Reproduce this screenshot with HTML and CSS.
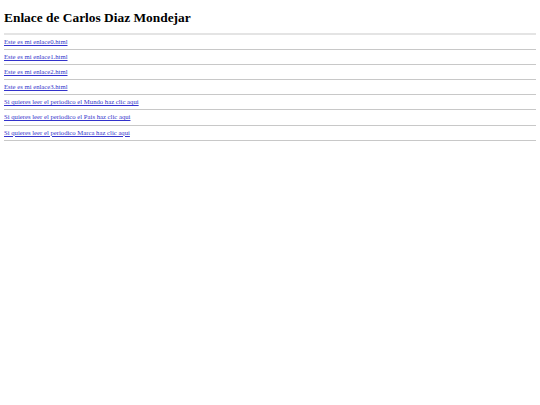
FILE: index.html
```html
<!DOCTYPE html>
<html lang="es">
<head>
<meta charset="utf-8">
<title>Enlace de Carlos Diaz Mondejar</title>
<link rel="stylesheet" href="styles.css">
</head>
<body>
<h1 class="title">Enlace de Carlos Diaz Mondejar</h1>
<div class="rule rule-first"></div>
<ul class="links">
  <li class="item"><a class="link" href="enlace0.html">Este es mi enlace0.html</a></li>
  <li class="item"><a class="link" href="enlace1.html">Este es mi enlace1.html</a></li>
  <li class="item"><a class="link" href="enlace2.html">Este es mi enlace2.html</a></li>
  <li class="item"><a class="link" href="enlace3.html">Este es mi enlace3.html</a></li>
  <li class="item"><a class="link" href="#mundo">Si quieres leer el periodico el Mundo haz clic aqui</a></li>
  <li class="item"><a class="link" href="#pais">Si quieres leer el periodico el Pais haz clic aqui</a></li>
  <li class="item"><a class="link" href="#marca">Si quieres leer el periodico Marca haz clic aqui</a></li>
</ul>
</body>
</html>
```
FILE: styles.css
```css
html, body {
  background: #ffffff;
}
body {
  margin: 4px;
  font-family: "Liberation Serif", "Times New Roman", serif;
  color: #000000;
}
.title {
  font-size: 13.4px;
  font-weight: bold;
  line-height: 18px;
  margin: 5px 0 6px 0;
}
.rule {
  height: 0;
  border-top: 1px solid #cfcfcf;
}
.rule-first {
  border-top: 2px solid #e4e4e4;
}
.links {
  list-style: none;
  margin: 0;
  padding: 0;
}
.item {
  height: 14.1px;
  line-height: 14px;
  border-bottom: 1px solid #c8c8c8;
  font-size: 6.7px;
}
.link {
  color: #3333cc;
  text-decoration: underline;
}
```
